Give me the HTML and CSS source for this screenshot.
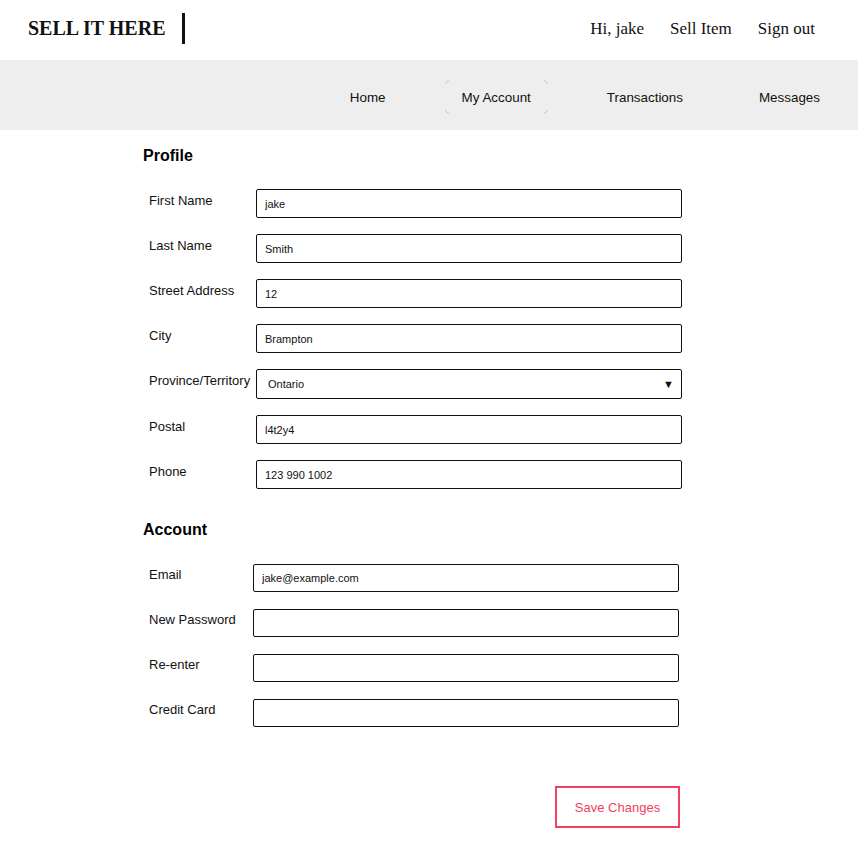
FILE: index.html
```html
<!DOCTYPE html>
<html>
<head>
<meta charset="utf-8">
<link rel="stylesheet" href="styles.css">
</head>
<body>
<header class="topbar">
  <div class="brand">
    <span class="logo">SELL IT HERE</span>
    <span class="logo-bar"></span>
  </div>
  <nav class="user-links">
    <a href="#">Hi, jake</a>
    <a href="#">Sell Item</a>
    <a href="#">Sign out</a>
  </nav>
</header>
<nav class="mainnav">
  <a href="#" class="nav-item">Home</a>
  <a href="#" class="nav-item active">My Account</a>
  <a href="#" class="nav-item">Transactions</a>
  <a href="#" class="nav-item">Messages</a>
</nav>
<main class="content">
  <h2 class="section-title">Profile</h2>
  <div class="form-grid profile">
    <label class="field-label">First Name</label>
    <input class="field" type="text" value="jake">
    <label class="field-label">Last Name</label>
    <input class="field" type="text" value="Smith">
    <label class="field-label">Street Address</label>
    <input class="field" type="text" value="12">
    <label class="field-label">City</label>
    <input class="field" type="text" value="Brampton">
    <label class="field-label">Province/Territory</label>
    <div class="select-wrap">
      <select class="field select"><option>Ontario</option></select>
      <span class="select-arrow">&#9660;</span>
    </div>
    <label class="field-label">Postal</label>
    <input class="field" type="text" value="l4t2y4">
    <label class="field-label">Phone</label>
    <input class="field" type="text" value="123 990 1002">
  </div>

  <h2 class="section-title account-title">Account</h2>
  <div class="form-grid account">
    <label class="field-label">Email</label>
    <input class="field small" type="text" value="jake@example.com">
    <label class="field-label">New Password</label>
    <input class="field small" type="password" value="">
    <label class="field-label">Re-enter</label>
    <input class="field small" type="password" value="">
    <label class="field-label">Credit Card</label>
    <input class="field small" type="text" value="">
  </div>
  <div class="actions">
    <button class="save-btn" type="button">Save Changes</button>
  </div>
</main>
</body>
</html>
```
FILE: styles.css
```css
* { box-sizing: border-box; }
html, body { margin: 0; padding: 0; background: #fff; }
body { font-family: "Liberation Sans", Arial, sans-serif; color: #111; }
a { color: inherit; text-decoration: none; }

.topbar {
  height: 60px;
  display: flex;
  align-items: center;
  justify-content: space-between;
  padding: 0 43px 0 28px;
}
.brand { display: flex; align-items: center; padding-bottom: 4px; }
.logo {
  font-family: "Liberation Serif", "Times New Roman", serif;
  font-weight: bold;
  font-size: 20px;
  color: #111;
}
.logo-bar {
  display: inline-block;
  width: 3px;
  height: 31px;
  background: #111;
  margin-left: 17px;
}
.user-links {
  display: flex;
  gap: 26px;
  font-family: "Liberation Serif", "Times New Roman", serif;
  font-size: 17px;
  padding-bottom: 2px;
}

.mainnav {
  height: 70px;
  background: #eeeeee;
  display: flex;
  justify-content: flex-end;
  align-items: center;
  gap: 42px;
  padding: 4px 21px 0 0;
}
.nav-item {
  position: relative;
  display: flex;
  align-items: center;
  height: 34px;
  padding: 0 17px;
  font-size: 13.4px;
  color: #111;
}
.nav-item.active {
  border: 1px solid #c4c4c4;
  border-radius: 5px;
  padding: 0 16px;
}
.nav-item.active::before {
  content: "";
  position: absolute;
  top: -1px; bottom: -1px; left: 3px; right: 3px;
  border-top: 1px solid #eee;
  border-bottom: 1px solid #eee;
}
.nav-item.active::after {
  content: "";
  position: absolute;
  top: 3px; bottom: 3px; left: -1px; right: -1px;
  border-left: 1px solid #eee;
  border-right: 1px solid #eee;
}

.content {
  width: 539px;
  margin-left: 143px;
  padding-top: 17px;
  padding-bottom: 20px;
}
.section-title {
  margin: 0;
  font-size: 16px;
  line-height: 18px;
  font-weight: bold;
  color: #000;
}
.form-grid {
  display: grid;
  row-gap: 16px;
  align-items: start;
}
.profile {
  grid-template-columns: 113px 426px;
  margin-top: 24px;
}
.account {
  grid-template-columns: 110px 426px;
  margin-top: 25px;
  row-gap: 17px;
}
.account-title { margin-top: 32px; }
.field-label {
  font-size: 13px;
  line-height: 15px;
  padding-left: 6px;
  padding-top: 4px;
  white-space: nowrap;
  color: #111;
}
.account .field-label { padding-top: 3px; }
.field {
  height: 29px;
  width: 426px;
  border: 1px solid #111;
  border-radius: 2px;
  padding: 0 8px;
  font-family: "Liberation Sans", Arial, sans-serif;
  font-size: 11px;
  color: #111;
  background: #fff;
  outline: none;
}
.field.small { height: 28px; }
.select-wrap { position: relative; width: 426px; }
.select {
  -webkit-appearance: none;
  appearance: none;
  height: 30px;
  padding-left: 11px;
}
.select-arrow {
  position: absolute;
  right: 8px;
  top: 8px;
  font-size: 11px;
  line-height: 14px;
  color: #111;
  pointer-events: none;
}
.actions {
  display: flex;
  justify-content: flex-end;
  margin-top: 59px;
  padding-right: 2px;
}
.save-btn {
  width: 125px;
  height: 42px;
  border: 2px solid #f43f5e;
  background: #fff;
  color: #f43f5e;
  font-family: "Liberation Sans", Arial, sans-serif;
  font-size: 13px;
  border-radius: 0;
  cursor: pointer;
}
```
